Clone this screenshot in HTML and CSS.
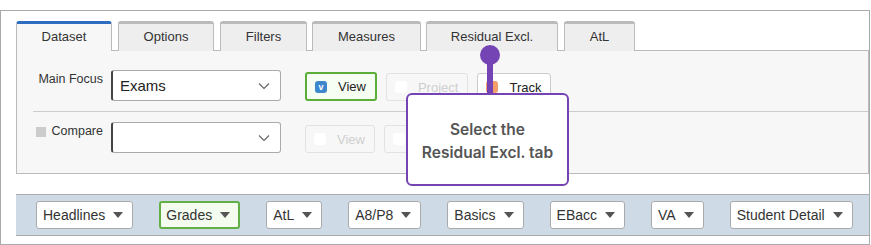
FILE: index.html
```html
<!DOCTYPE html>
<html lang="en">
<head>
  <meta charset="UTF-8">
  <title>Dataset</title>
  <link rel="stylesheet" href="styles.css">
</head>
<body>
  <div class="frame">

    <!-- Tabs -->
    <div class="tabs">
      <div class="tab active">Dataset</div>
      <div class="tab">Options</div>
      <div class="tab tab-filters">Filters</div>
      <div class="tab tab-measures">Measures</div>
      <div class="tab tab-residual">Residual Excl.</div>
      <div class="tab tab-atl">AtL</div>
    </div>

    <!-- Dataset panel -->
    <div class="panel">
      <div class="field-row">
        <div class="field-label">Main Focus</div>
        <div class="select">
          <span>Exams</span>
          <svg width="12" height="8" viewBox="0 0 12 8"><polyline points="1,1.5 6,6.5 11,1.5" fill="none" stroke="#666" stroke-width="1.2"/></svg>
        </div>
        <div class="toggle selected"><span class="box blue">v</span>View</div>
        <div class="toggle disabled"><span class="box"></span>Project</div>
        <div class="toggle"><span class="box orange"></span>Track</div>
      </div>

      <div class="field-row last">
        <div class="field-label"><span class="check"></span>Compare</div>
        <div class="select">
          <span></span>
          <svg width="12" height="8" viewBox="0 0 12 8"><polyline points="1,1.5 6,6.5 11,1.5" fill="none" stroke="#666" stroke-width="1.2"/></svg>
        </div>
        <div class="toggle disabled"><span class="box"></span>View</div>
        <div class="toggle disabled"><span class="box"></span>Project</div>
      </div>
    </div>

    <!-- Report menu bar -->
    <div class="menubar">
      <div class="menu">Headlines<span class="caret"></span></div>
      <div class="menu selected">Grades<span class="caret"></span></div>
      <div class="menu">AtL<span class="caret"></span></div>
      <div class="menu">A8/P8<span class="caret"></span></div>
      <div class="menu">Basics<span class="caret"></span></div>
      <div class="menu">EBacc<span class="caret"></span></div>
      <div class="menu">VA<span class="caret"></span></div>
      <div class="menu">Student Detail<span class="caret"></span></div>
    </div>

    <!-- Walkthrough tip -->
    <div class="tip-dot"></div>
    <div class="tip-stem"></div>
    <div class="tip">Select the<br>Residual Excl. tab</div>
  </div>
</body>
</html>
```

FILE: styles.css
```css
body {
  margin: 0;
  font-family: "Liberation Sans", Arial, sans-serif;
  color: #333;
  background: #fff;
}

.frame {
  position: relative;
  margin-top: 10px;
  width: 853px;
  height: 223px;
  border: 1px solid #aaa;
  padding: 10px 0 0 15px;
}

/* Tabs */
.tabs {
  display: flex;
  gap: 6px;
  height: 30px;
  margin-bottom: -1px;
  position: relative;
  z-index: 1;
}

.tab {
  width: 96px;
  height: 30px;
  box-sizing: border-box;
  line-height: 25px;
  font-size: 13px;
  text-align: center;
  color: #333;
  background: #eee;
  border: 1px solid #bbb;
  border-top: 3px solid #bbb;
  border-bottom: none;
  border-radius: 3px 3px 0 0;
  white-space: nowrap;
}

.tab.active {
  background: #f7f7f7;
  border-top-color: #2e6cc1;
}

.tab-filters  { width: 87px; }
.tab-measures { width: 109px; margin-left: -1px; }
.tab-residual { width: 132px; margin-left: -1px; }
.tab-atl      { width: 71px; }

/* Panel */
.panel {
  background: #f7f7f7;
  border: 1px solid #bbb;
}

.field-row {
  display: flex;
  align-items: flex-end;
  margin-left: 16px;
  padding: 19px 0 10px;
  border-bottom: 1px solid #ccc;
}

.field-row.last {
  padding: 10px 0 20px;
  border-bottom: none;
}

.field-label {
  align-self: flex-start;
  display: flex;
  justify-content: flex-end;
  align-items: center;
  gap: 6px;
  width: 70px;
  margin: 2px 8px 0 0;
  font-size: 12.5px;
  line-height: 15px;
  color: #333;
  white-space: nowrap;
}

.check {
  width: 10px;
  height: 10px;
  background: #ccc;
}

.select {
  display: flex;
  align-items: center;
  justify-content: space-between;
  width: 170px;
  height: 31px;
  box-sizing: border-box;
  padding: 0 10px 0 7px;
  margin-right: 24px;
  background: #fff;
  border: 1px solid #aaa;
  border-left: 2px solid #444;
  border-radius: 3px;
  font-size: 15px;
  color: #222;
}

.toggle {
  display: flex;
  align-items: center;
  height: 28px;
  box-sizing: border-box;
  padding: 0 9px 0 8px;
  margin-right: 9px;
  background: #fff;
  border: 1px solid #ccc;
  border-radius: 3px;
  font-size: 13px;
  color: #222;
}

.toggle.selected {
  height: 29px;
  background: #f6fdf2;
  border: 2px solid #5aad36;
}

.toggle.disabled {
  background: #f7f7f7;
  border-color: #e2e2e2;
  color: #cfcfcf;
}

.box {
  width: 12px;
  height: 12px;
  margin-right: 11px;
  border-radius: 3px;
  background: #f3f3f3;
  color: #fff;
  font-size: 9px;
  font-weight: bold;
  line-height: 12px;
  text-align: center;
}

.toggle.disabled .box { background: #fff; }
.box.blue { background: #3d87cc; }
.box.orange { background: #f59e6c; }

/* Menu bar */
.menubar {
  display: flex;
  gap: 26px;
  margin-top: 20px;
  padding: 6px 20px;
  background: #cedbe6;
  border-top: 1px solid #aaa;
  border-bottom: 1px solid #aaa;
}

.menu {
  display: flex;
  flex-shrink: 0;
  align-items: center;
  height: 28px;
  box-sizing: border-box;
  padding: 0 9px 0 6px;
  background: #fff;
  border: 1px solid #aaa;
  border-radius: 3px;
  font-size: 14px;
  color: #333;
  white-space: nowrap;
}

.menu.selected {
  padding: 0 8px 0 5px;
  background: #f4fbef;
  border: 2px solid #62b045;
}

.caret {
  margin-left: 8px;
  width: 0;
  height: 0;
  border-left: 5px solid transparent;
  border-right: 5px solid transparent;
  border-top: 6px solid #555;
}

/* Tip */
.tip {
  position: absolute;
  left: 405px;
  top: 82px;
  width: 163px;
  height: 93px;
  box-sizing: border-box;
  padding-top: 23px;
  background: #fff;
  border: 2px solid #7444b5;
  border-radius: 6px;
  font-family: Inter, "Liberation Sans", sans-serif;
  font-size: 15.5px;
  font-weight: 600;
  line-height: 23px;
  color: #555;
  text-align: center;
  white-space: nowrap;
  z-index: 3;
}

.tip-dot {
  position: absolute;
  left: 479px;
  top: 34px;
  width: 20px;
  height: 20px;
  border-radius: 50%;
  background: #7444b5;
  z-index: 2;
}

.tip-stem {
  position: absolute;
  left: 486px;
  top: 44px;
  width: 6px;
  height: 40px;
  background: #7444b5;
  z-index: 2;
}
```
